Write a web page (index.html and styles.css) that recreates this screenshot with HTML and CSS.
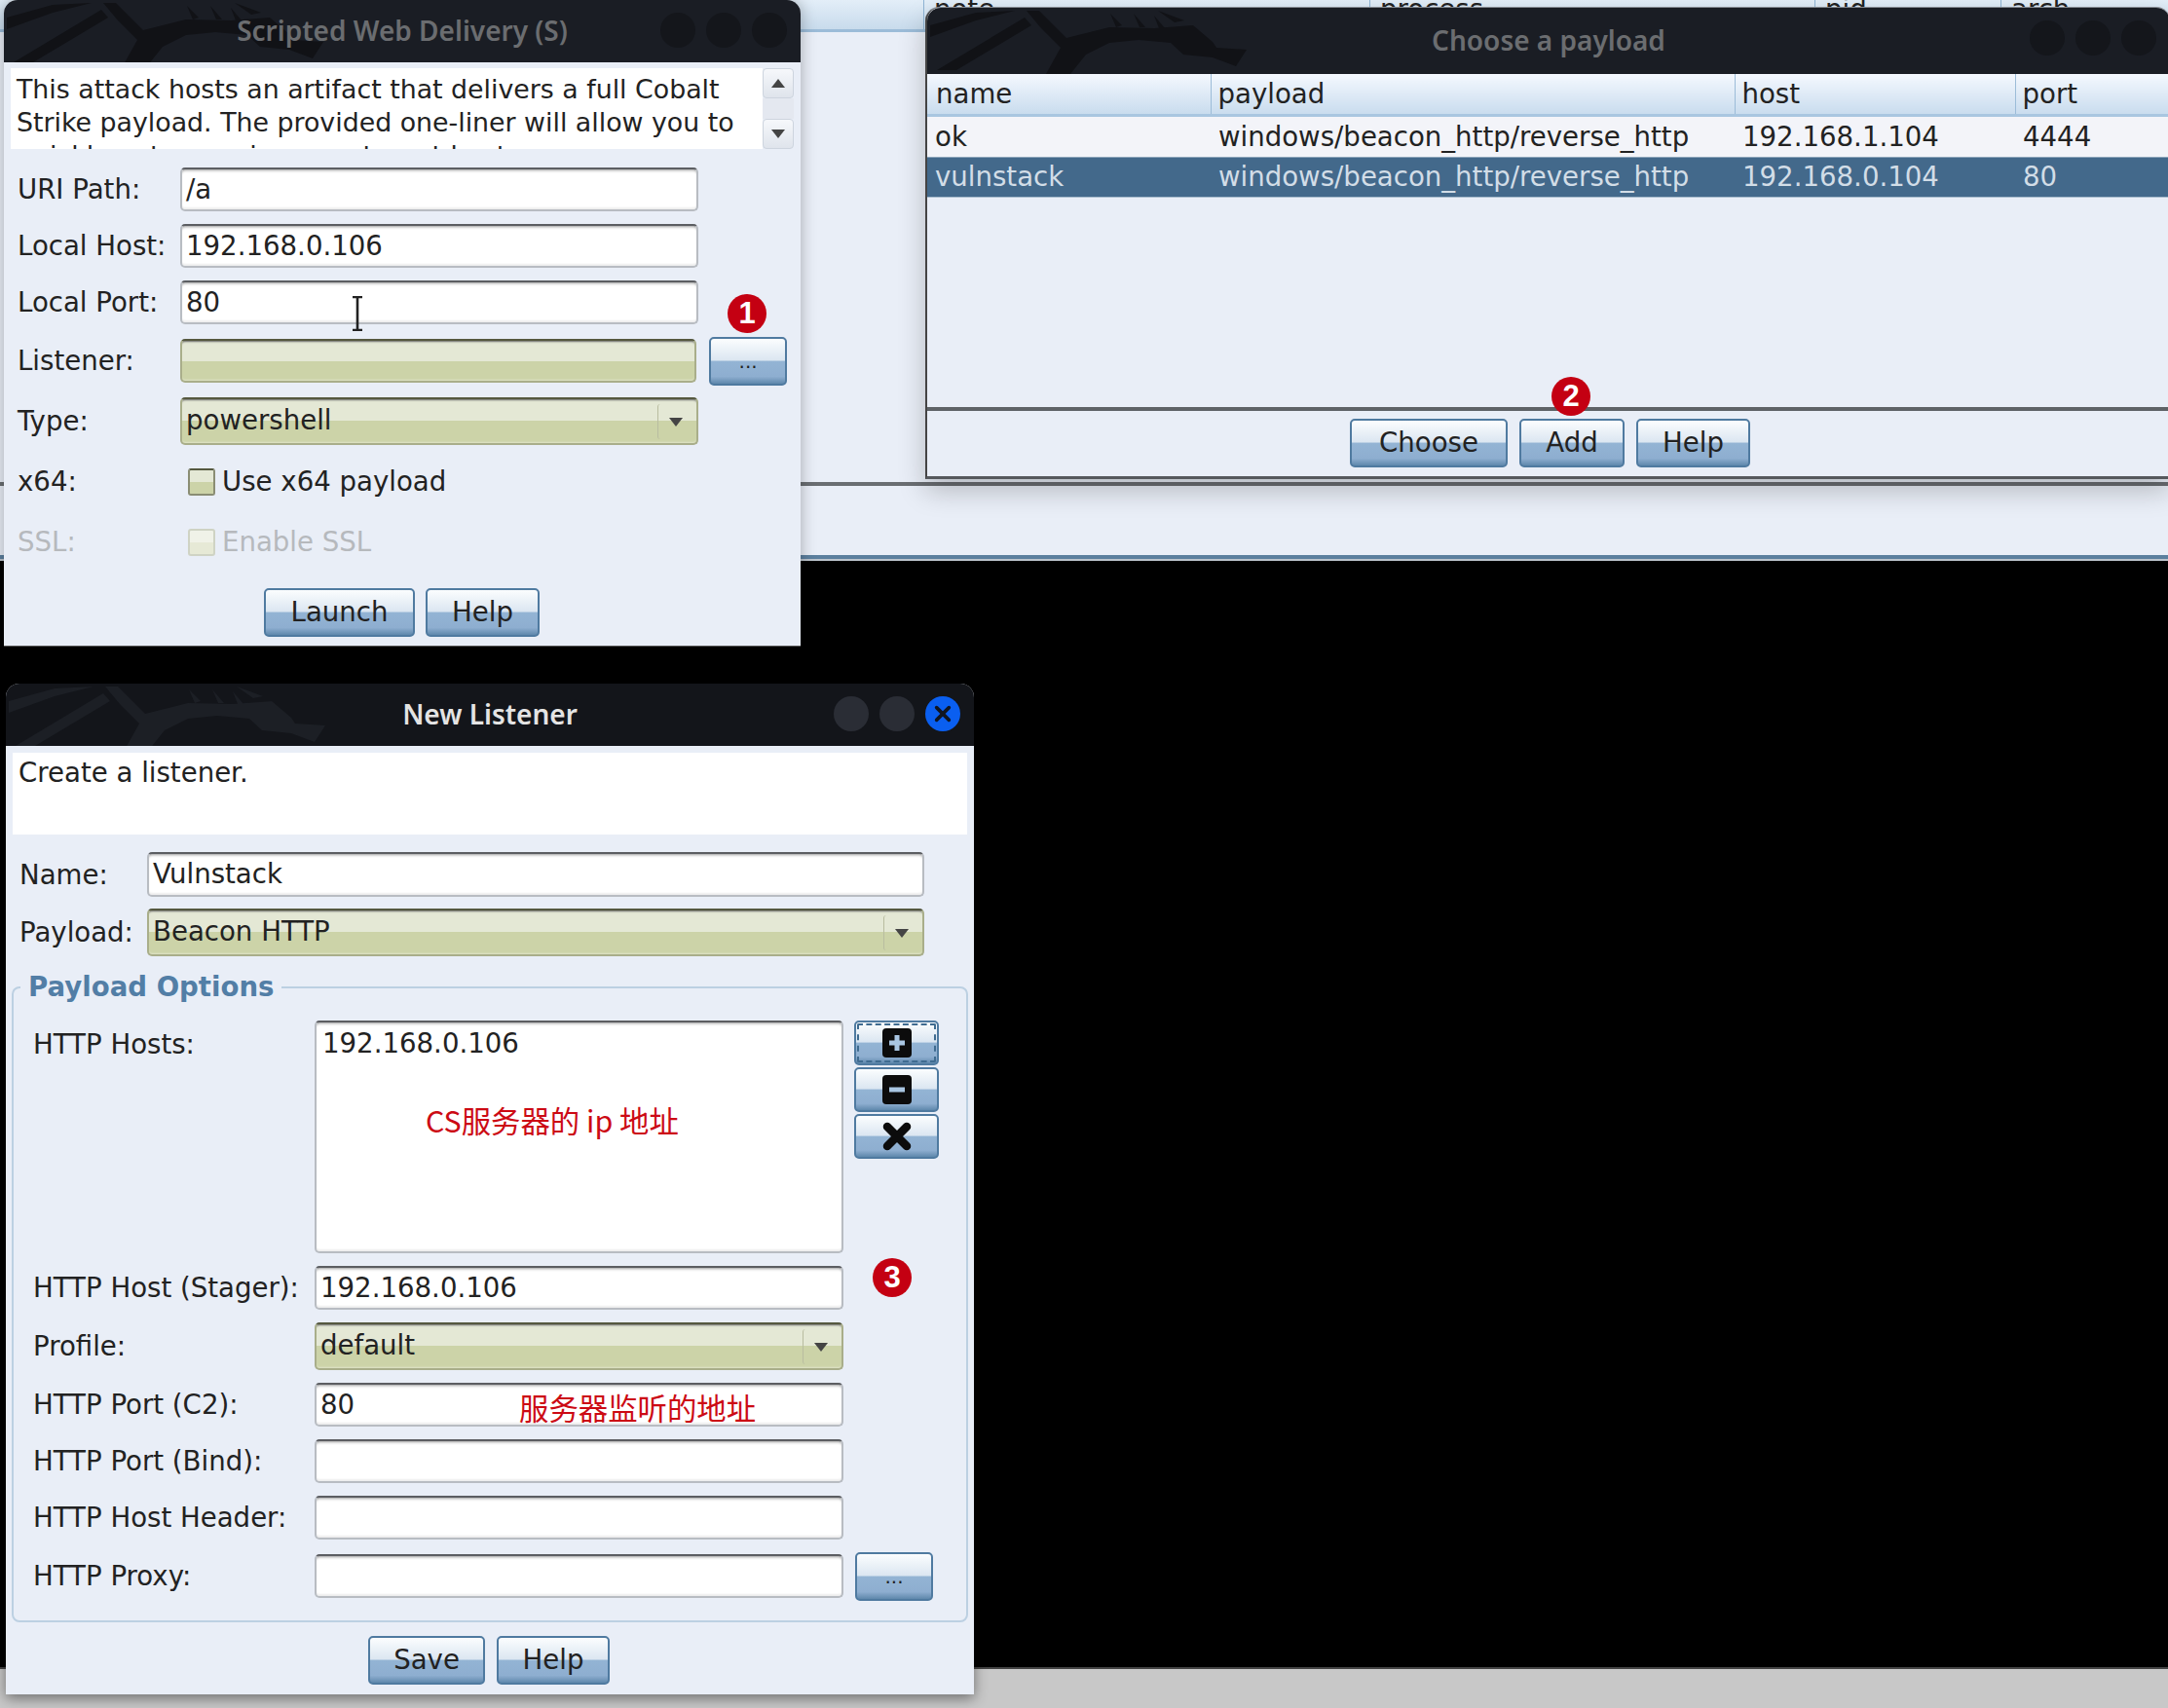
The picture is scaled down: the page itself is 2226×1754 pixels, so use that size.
FILE: index.html
```html
<!DOCTYPE html>
<html lang="en">
<head>
    <meta charset="UTF-8">
    <title>Listeners</title>
    <link rel="stylesheet" href="styles.css">
</head>
<body>
    <svg class="defs" width="0" height="0">
        <symbol id="dragon" viewBox="0 0 360 68">
            <path d="M3 18L50 5L90 3L50 13L3 30Z"/>
            <path d="M10 64L100 10L107 18L30 64Z"/>
            <path d="M102 3L115 3L143 31L187 20L233 21L273 18L293 35L297 41L328 43L317 60L293 51L263 48L250 36L217 33L187 36L163 48L147 68L122 68L137 41L117 21Z"/>
            <path d="M188 6L200 18L194 20Z"/>
            <path d="M212 6L224 20L218 20Z"/>
            <path d="M233 8L244 21L238 21Z"/>
            <path d="M237 3L264 13L254 15Z"/>
        </symbol>
    </svg>

    <div class="desktop">
        <div class="app">
            <div class="app-head">
                <span class="head-gap"></span>
                <span class="head-cell head-note">note</span>
                <span class="head-cell head-process">process</span>
                <span class="head-cell head-pid">pid</span>
                <span class="head-cell">arch</span>
            </div>
            <div class="app-table"></div>
            <div class="app-bar"></div>
        </div>
        <div class="void"></div>
        <div class="floor"></div>

        <!-- web delivery dialog -->
        <section class="win win-delivery">
            <header class="title title-idle">
                <svg class="dragon"><use href="#dragon"/></svg>
                <span>Scripted Web Delivery (S)</span>
                <div class="ctrls"><i></i><i></i><i></i></div>
            </header>
            <div class="desc-wrap">
                <p class="desc">This attack hosts an artifact that delivers a full Cobalt Strike payload. The provided one-liner will allow you to quickly get a session on a target host.</p>
                <div class="scroll">
                    <b class="scroll-btn"><em class="tri tri-up"></em></b>
                    <b class="scroll-track"></b>
                    <b class="scroll-btn"><em class="tri"></em></b>
                </div>
            </div>
            <form class="form form-delivery">
                <div class="row"><label>URI Path:</label><div class="field">/a</div></div>
                <div class="row"><label>Local Host:</label><div class="field">192.168.0.106</div></div>
                <div class="row"><label>Local Port:</label><div class="field">80</div>
                    <svg class="ibeam" viewBox="0 0 14 36"><path d="M2 1H12M7 1V35M2 35H12" fill="none" stroke="#222" stroke-width="2.6"/></svg>
                </div>
                <div class="row row-tall"><label>Listener:</label><div class="field field-combo"></div><button type="button" class="btn btn-dots">...</button></div>
                <div class="row row-tall"><label>Type:</label><div class="field field-combo combo-tall">powershell<span class="arrow"><em class="tri"></em></span></div></div>
                <div class="row row-tall"><label>x64:</label><div class="check"><span class="box"></span>Use x64 payload</div></div>
                <div class="row row-tall off"><label>SSL:</label><div class="check"><span class="box"></span>Enable SSL</div></div>
                <div class="actions"><button type="button" class="btn btn-launch">Launch</button><button type="button" class="btn btn-help">Help</button></div>
            </form>
        </section>

        <!-- payload chooser -->
        <section class="win win-payload">
            <header class="title title-idle title-payload">
                <svg class="dragon"><use href="#dragon"/></svg>
                <span>Choose a payload</span>
                <div class="ctrls"><i></i><i></i><i></i></div>
            </header>
            <div class="table-box">
                <table class="grid">
                    <thead>
                        <tr><th class="c-name">name</th><th class="c-payload">payload</th><th class="c-host">host</th><th>port</th></tr>
                    </thead>
                    <tbody>
                        <tr><td>ok</td><td>windows/beacon_http/reverse_http</td><td>192.168.1.104</td><td>4444</td></tr>
                        <tr class="sel"><td>vulnstack</td><td>windows/beacon_http/reverse_http</td><td>192.168.0.104</td><td>80</td></tr>
                    </tbody>
                </table>
            </div>
            <div class="actions actions-payload">
                <button type="button" class="btn btn-choose">Choose</button>
                <button type="button" class="btn btn-add">Add</button>
                <button type="button" class="btn btn-help2">Help</button>
            </div>
        </section>

        <!-- new listener -->
        <section class="win win-listener">
            <header class="title title-live">
                <svg class="dragon"><use href="#dragon"/></svg>
                <span>New Listener</span>
                <div class="ctrls"><i></i><i></i><i class="close">
                    <svg viewBox="0 0 34 34"><path d="M11 11L23 23M23 11L11 23" stroke="#10151f" stroke-width="3.4" stroke-linecap="round"/></svg>
                </i></div>
            </header>
            <p class="desc desc-listener">Create a listener.</p>
            <form class="form form-listener">
                <div class="row row-name"><label>Name:</label><div class="field">Vulnstack</div></div>
                <div class="row row-tall"><label>Payload:</label><div class="field field-combo combo-tall">Beacon HTTP<span class="arrow"><em class="tri"></em></span></div></div>
                <fieldset class="group">
                    <legend>Payload Options</legend>
                    <div class="opts">
                        <div class="row row-hosts">
                            <label>HTTP Hosts:</label>
                            <div class="field field-area">192.168.0.106</div>
                            <div class="side">
                                <button type="button" class="btn btn-icon btn-focus">
                                    <svg viewBox="0 0 30 30"><rect width="30" height="30" rx="4" fill="#0c0c0c"/><path d="M15 7V23M7 15H23" stroke="#a9c6e2" stroke-width="5"/></svg>
                                </button>
                                <button type="button" class="btn btn-icon">
                                    <svg viewBox="0 0 30 30"><rect width="30" height="30" rx="4" fill="#0c0c0c"/><path d="M7 15H23" stroke="#a9c6e2" stroke-width="5"/></svg>
                                </button>
                                <button type="button" class="btn btn-icon">
                                    <svg viewBox="0 0 30 30"><path d="M5 5L25 25M25 5L5 25" stroke="#0c0c0c" stroke-width="8.5" stroke-linecap="round"/></svg>
                                </button>
                            </div>
                        </div>
                        <div class="row"><label>HTTP Host (Stager):</label><div class="field">192.168.0.106</div></div>
                        <div class="row row-tall"><label>Profile:</label><div class="field field-combo combo-tall">default<span class="arrow"><em class="tri"></em></span></div></div>
                        <div class="row"><label>HTTP Port (C2):</label><div class="field">80</div></div>
                        <div class="row"><label>HTTP Port (Bind):</label><div class="field"></div></div>
                        <div class="row"><label>HTTP Host Header:</label><div class="field"></div></div>
                        <div class="row row-tall"><label>HTTP Proxy:</label><div class="field"></div><button type="button" class="btn btn-dots">...</button></div>
                    </div>
                </fieldset>
                <div class="actions actions-listener"><button type="button" class="btn btn-save">Save</button><button type="button" class="btn btn-help3">Help</button></div>
            </form>
        </section>

        <!-- red notes put on the screenshot -->
        <span class="badge badge-1">1</span>
        <span class="badge badge-2">2</span>
        <span class="badge badge-3">3</span>
        <span class="note note-ip">CS服务器的 ip 地址</span>
        <span class="note note-port">服务器监听的地址</span>
    </div>
</body>
</html>
```

FILE: styles.css
```css
body {
    margin: 0;
    background: #000;
    font-family: "DejaVu Sans", sans-serif;
    font-size: 27.6px;
    color: #222;
}
.defs { position: absolute; }
.desktop {
    position: relative;
    width: 2226px;
    height: 1754px;
    overflow: hidden;
    display: flex;
    flex-direction: column;
}

/* main app behind the dialogs */
.app { height: 576px; display: flex; flex-direction: column; background: #e9eef7; }
.app-head {
    height: 30px;
    display: flex;
    line-height: 20px;
    background: linear-gradient(#e3eef8, #c8dbec);
    border-bottom: 3px solid #9cbcd8;
}
.head-gap { width: 948px; }
.head-cell { padding-left: 10px; border-left: 1px solid #8fb4d4; }
.head-note { width: 447px; }
.head-process { width: 446px; }
.head-pid { width: 180px; }
.app-table { height: 464px; border-bottom: 4px solid #6a6e72; }
.app-bar { margin-top: 71px; height: 4px; background: #5b7f9e; border-bottom: 2px solid #bcc4cc; }
.void { height: 1136px; background: #000; border-bottom: 2px solid #444; }
.floor { flex: 1; background: #c8c8c8; }

/* windows */
.win { position: absolute; background: #e9eef7; }
.win-delivery {
    left: 4px; top: 0; width: 818px; height: 664px;
    border-radius: 14px 14px 0 0;
    box-shadow: 0 0 16px rgba(0, 0, 0, .3);
    border-bottom: 1px solid #555;
    box-sizing: border-box;
}
.win-payload {
    left: 950px; top: 8px; width: 1278px; height: 484px;
    border-radius: 14px 14px 0 0;
    box-shadow: 0 12px 28px rgba(0, 0, 0, .22), 0 -1px 0 #8a8f96;
    border-left: 2px solid #444;
    border-bottom: 3px solid #55585c;
    box-sizing: border-box;
}
.win-listener {
    left: 6px; top: 702px; width: 994px; height: 1038px;
    border-radius: 14px 14px 0 0;
    box-shadow: 0 4px 14px rgba(0, 0, 0, .45);
}

.title {
    position: relative;
    height: 64px;
    box-sizing: border-box;
    padding-bottom: 3px;
    display: flex;
    align-items: center;
    justify-content: center;
    border-radius: 14px 14px 0 0;
    font-family: "Noto Sans", sans-serif;
    font-weight: 600;
    font-size: 28px;
    overflow: hidden;
}
.title-payload { height: 68px; padding-bottom: 2px; }
.title-idle { background: #1a1d24; color: #6b6d70; fill: #111216; }
.title-live { background: #13151a; color: #e4e4e4; fill: #1c1f25; }
.dragon { position: absolute; left: 0; top: 0; width: 360px; height: 68px; }
.title span { position: relative; }
.ctrls { position: absolute; right: 14px; top: 13px; display: flex; gap: 11px; }
.ctrls i { width: 36px; height: 36px; border-radius: 50%; background: #14161b; }
.title-live .ctrls i { background: #2a2d35; }
.title-live .ctrls .close { background: #0a5ff0; }
.close svg { display: block; }

/* description box */
.desc-wrap { margin: 6px 7px 0; height: 83px; display: flex; }
.desc {
    margin: 0;
    flex: 1;
    height: 83px;
    padding: 5px 6px 0;
    box-sizing: border-box;
    overflow: hidden;
    background: #fff;
    font-size: 26.8px;
    line-height: 34px;
}
.desc-listener { margin: 7px 7px 0; height: 84px; padding: 3px 6px 0; font-size: 27.6px; line-height: 35px; }
.scroll { width: 32px; display: flex; flex-direction: column; }
.scroll-btn {
    height: 29px;
    display: flex;
    align-items: center;
    justify-content: center;
    background: linear-gradient(#f6f8fb, #dfe4ec);
    border: 1px solid #cdd4de;
    border-radius: 4px;
}
.scroll-track { flex: 1; background: #e4e8f0; }
.tri { width: 0; height: 0; border: 7px solid transparent; border-top: 9px solid #444; border-bottom: 0; }
.tri-up { border-top: 0; border-bottom: 9px solid #444; }

/* form rows */
.form { display: flex; flex-direction: column; gap: 13px; }
.form-delivery { padding: 19px 14px 0 14px; }
.form-listener { padding: 18px 0 0 14px; gap: 12px; }
.row { position: relative; height: 45px; display: flex; align-items: center; }
.row-tall { height: 49px; }
.row-name { height: 46px; }
.row label { flex: none; }
.form-delivery label { width: 167px; }
.form-listener .row > label { width: 131px; }
.form-listener .opts .row > label { width: 289px; }
.field {
    box-sizing: border-box;
    height: 45px;
    width: 532px;
    padding: 0 4px;
    line-height: 42px;
    background: #fff;
    border: 2px solid #b8bcc2;
    border-top-color: #5c5e62;
    border-radius: 5px;
    box-shadow: inset 0 3px 3px -2px #999, inset 0 -4px 2px -2px #eee;
    white-space: nowrap;
}
.form-listener .row-name .field,
.form-listener > .row-tall .field { width: 798px; }
.opts .field { width: 543px; }
.row-name .field { height: 46px; }
.field-combo {
    position: relative;
    border-color: #a9ae8a;
    border-top-color: #55583f;
    background: linear-gradient(#e4e8d5 50%, #ccd3a8 50%);
    box-shadow: inset 0 3px 2px -2px #666, inset 0 -3px 2px -2px #dfe3c8;
}
.combo-tall { height: 49px; line-height: 44px; }
.arrow {
    position: absolute;
    right: 4px;
    top: 5px;
    bottom: 4px;
    width: 35px;
    display: flex;
    align-items: center;
    justify-content: center;
    border-left: 1px solid #b9bda0;
    border-radius: 3px;
}
.ibeam { position: absolute; left: 342px; top: 16px; width: 14px; height: 36px; }

.check { display: flex; align-items: center; margin-left: 8px; }
.box {
    box-sizing: border-box;
    width: 28px;
    height: 28px;
    margin-right: 7px;
    border: 2px solid #8a8d74;
    border-top-color: #55583f;
    border-radius: 3px;
    background: linear-gradient(#e4e8d5 50%, #ccd3a8 50%);
}
.off { color: #b6b9bd; }
.off .box { border-color: #cfd3c4; background: linear-gradient(#f0f2e8 50%, #e6e9d6 50%); }

/* fieldset */
.group {
    margin: 5px 0 0 -8px;
    padding: 0 0 21px 20px;
    width: 982px;
    box-sizing: border-box;
    height: 667px;
    border: 2px solid #bcd0e2;
    border-radius: 8px;
}
.group legend {
    margin-left: -13px;
    padding: 0 7px 0 8px;
    color: #527ea6;
    font-weight: bold;
    line-height: 30px;
}
.opts { display: flex; flex-direction: column; gap: 13px; margin-top: 19px; }
.row-hosts { height: 239px; align-items: flex-start; gap: 0; }
.row-hosts label { margin-top: 8px; }
.field-area { height: 239px; padding: 3px 6px; line-height: 38px; }
.side { display: flex; flex-direction: column; gap: 2px; margin-left: 11px; }

/* nimbus style buttons */
.btn {
    box-sizing: border-box;
    height: 50px;
    padding: 0 0 1px;
    font: inherit;
    color: #222;
    border: 2px solid #4f7aa0;
    border-radius: 5px;
    background: linear-gradient(#fbfdfe 0, #dbe6f1 48%, #93b4d4 50%, #8eaed0 84%, #5f88ac 100%);
    cursor: pointer;
}
.btn-dots { width: 80px; margin-left: 12px; font-size: 20px; line-height: 40px; padding: 0; }
.form-delivery .btn-dots { margin-left: 13px; }
.btn-icon { width: 87px; height: 46px; padding: 0; display: flex; align-items: center; justify-content: center; }
.btn-icon svg { width: 30px; height: 30px; }
.btn-focus { outline: 2px dashed #3f6b90; outline-offset: -5px; }
.actions { display: flex; gap: 11px; justify-content: flex-start; }
.form-delivery .actions { margin: 10px 0 0 253px; }
.actions-payload { margin: 8px 0 0 434px; gap: 12px; }
.actions-listener { margin: 2px 0 0 358px; gap: 12px; }
.btn-launch { width: 155px; }
.btn-help { width: 117px; }
.btn-choose { width: 162px; }
.btn-add { width: 108px; }
.btn-help2 { width: 117px; }
.btn-save { width: 120px; }
.btn-help3 { width: 116px; }

/* payload table */
.table-box { height: 342px; border-bottom: 4px solid #5e6266; }
.grid { width: 100%; border-collapse: collapse; table-layout: fixed; }
.grid th {
    box-sizing: border-box;
    height: 42px;
    padding: 0 0 0 9px;
    font-weight: normal;
    text-align: left;
    border-right: 1px solid #9cbcd8;
    border-bottom: 3px solid #a9c6e0;
    background: linear-gradient(#f4f8fe, #c9dcee);
}
.grid th + th { padding-left: 7px; }
.c-name { width: 291px; }
.c-payload { width: 538px; }
.c-host { width: 288px; }
.grid td { height: 41px; padding: 0 0 0 8px; background: #f3f4f9; white-space: nowrap; }
.grid td + td { padding-left: 8px; }
.grid .sel td { height: 40px; background: #43698b; color: #d2dde7; border-bottom: 1px solid #a8bccd; border-top: 1px solid #8ba4ba; }

/* red notes */
.badge {
    position: absolute;
    width: 40px;
    height: 40px;
    border-radius: 50%;
    background: #c40012;
    color: #fff;
    font-family: "Liberation Sans", sans-serif;
    font-weight: bold;
    font-size: 31px;
    line-height: 40px;
    text-align: center;
}
.badge-1 { left: 747px; top: 302px; }
.badge-2 { left: 1593px; top: 387px; }
.badge-3 { left: 896px; top: 1292px; }
.note {
    position: absolute;
    color: #cc0a14;
    font-family: "Noto Sans CJK SC", "Noto Sans", sans-serif;
    font-size: 30.4px;
    line-height: 40px;
    white-space: nowrap;
}
.note-ip { left: 437px; top: 1130px; }
.note-port { left: 533px; top: 1425px; }
```
